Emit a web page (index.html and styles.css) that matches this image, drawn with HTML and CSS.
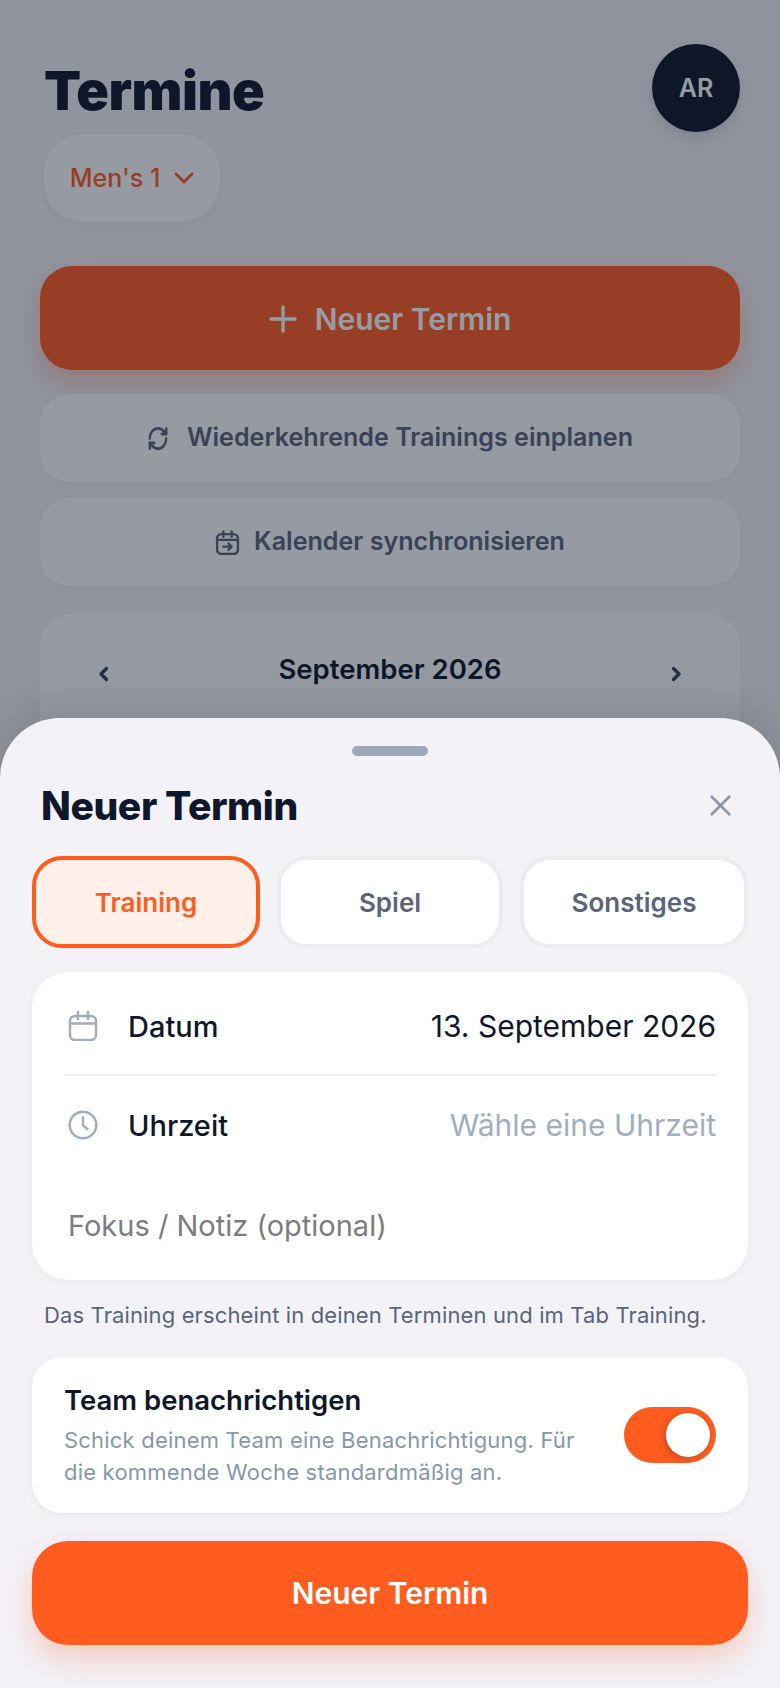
FILE: index.html
```html
<!DOCTYPE html>
<html lang="de">
<head>
    <meta charset="UTF-8">
    <title>Termine</title>
    <link rel="stylesheet" href="styles.css">
</head>
<body>
    <div class="page">
        <div class="top">
            <div>
                <h1 class="page-title">Termine</h1>
                <button class="team-pill">Men's 1
                    <svg class="chev" viewBox="0 0 20 12"><path d="M2 2l8 8 8-8"/></svg>
                </button>
            </div>
            <div class="avatar">AR</div>
        </div>

        <button class="btn-main">
            <svg class="plus" viewBox="0 0 28 28"><path d="M14 2v24M2 14h24"/></svg>
            Neuer Termin
        </button>
        <button class="btn-soft">
            <svg class="refresh-icon" viewBox="0 0 24 24" preserveAspectRatio="none">
                <path d="M3 12a9 9 0 0 1 9-9 9.75 9.75 0 0 1 6.74 2.74L21 8"/>
                <path d="M21 3v5h-5"/>
                <path d="M21 12a9 9 0 0 1-9 9 9.75 9.75 0 0 1-6.74-2.74L3 16"/>
                <path d="M8 16H3v5"/>
            </svg>
            Wiederkehrende Trainings einplanen
        </button>
        <button class="btn-soft second">
            <svg class="soft-icon" viewBox="0 0 24 24">
                <rect x="2" y="4" width="20" height="19" rx="4"/>
                <path d="M8 1.500v5M16 1.500v5M2 9.500h20M8 16h8M13 13l3 3-3 3"/>
            </svg>
            Kalender synchronisieren
        </button>

        <div class="month-card">
            <svg class="month-arrow" viewBox="0 0 11 16"><path d="M8.500 2.500L3 8l5.500 5.500"/></svg>
            <span class="month-name">September 2026</span>
            <svg class="month-arrow" viewBox="0 0 11 16"><path d="M2.500 2.500L8 8l-5.500 5.500"/></svg>
        </div>
    </div>

    <div class="scrim"></div>

    <div class="sheet">
        <div class="handle"></div>
        <div class="sheet-head">
            <h2>Neuer Termin</h2>
            <svg class="close" viewBox="0 0 24 24"><path d="M2 2l20 20M22 2L2 22"/></svg>
        </div>

        <div class="tabs">
            <div class="tab active">Training</div>
            <div class="tab">Spiel</div>
            <div class="tab">Sonstiges</div>
        </div>

        <div class="form-card">
            <div class="form-row first">
                <svg class="row-icon" viewBox="0 0 30 30">
                    <rect x="2" y="5" width="26" height="24" rx="5"/>
                    <path d="M10 1v7M20 1v7M2 12.500h26"/>
                </svg>
                <span class="row-label">Datum</span>
                <span class="row-value">13. September 2026</span>
            </div>
            <div class="form-row">
                <svg class="row-icon" viewBox="0 0 30 30">
                    <circle cx="15" cy="15" r="13.300"/>
                    <path d="M15 7.500v8l4.500 3.500"/>
                </svg>
                <span class="row-label">Uhrzeit</span>
                <span class="row-value muted">Wähle eine Uhrzeit</span>
            </div>
            <div class="note">Fokus / Notiz (optional)</div>
        </div>

        <p class="hint">Das Training erscheint in deinen Terminen und im Tab Training.</p>

        <div class="notify-card">
            <div class="notify-text">
                <strong>Team benachrichtigen</strong>
                <p>Schick deinem Team eine Benachrichtigung. Für die kommende Woche standardmäßig an.</p>
            </div>
            <div class="toggle"><span class="knob"></span></div>
        </div>

        <button class="btn-submit">Neuer Termin</button>
    </div>
</body>
</html>
```

FILE: styles.css
```css
* {
    box-sizing: border-box;
}
html, body {
    margin: 0;
    padding: 0;
}
body {
    width: 780px;
    height: 1688px;
    overflow: hidden;
    position: relative;
    background-color: #f2f2f7;
    font-family: 'Inter', 'Liberation Sans', sans-serif;
    color: #0f172a;
}
button {
    font-family: inherit;
    border: none;
    display: flex;
    align-items: center;
    justify-content: center;
}
svg {
    fill: none;
    stroke: currentColor;
    stroke-linecap: round;
    stroke-linejoin: round;
    flex-shrink: 0;
}

.page {
    padding: 44px 40px 0;
}
.top {
    display: flex;
    justify-content: space-between;
    align-items: flex-start;
    margin-bottom: 44px;
}
.page-title {
    margin: 0 0 0 4px;
    height: 90px;
    line-height: 93px;
    font-size: 54px;
    font-weight: 900;
    letter-spacing: -0.5px;
}
.team-pill {
    margin-left: 4px;
    width: 176px;
    height: 88px;
    gap: 14px;
    border-radius: 38px;
    background-color: #fdfdfd;
    color: #ff5c20;
    font-size: 25px;
    font-weight: 500;
    box-shadow: 0 2px 6px rgba(15,23,42,0.05);
}
.chev {
    width: 20px;
    height: 12px;
    stroke-width: 2.800;
}
.avatar {
    width: 88px;
    height: 88px;
    border-radius: 50%;
    background-color: #0f172a;
    color: #fff;
    display: flex;
    align-items: center;
    justify-content: center;
    font-size: 25px;
    font-weight: 600;
    box-shadow: 0 6px 14px rgba(15,23,42,0.12);
}
.btn-main {
    width: 100%;
    height: 104px;
    padding-top: 2px;
    gap: 18px;
    border-radius: 32px;
    background-color: #ff5c20;
    color: #fff;
    font-size: 30px;
    font-weight: 600;
    box-shadow: 0 12px 28px rgba(255,92,32,0.3);
}
.plus {
    width: 28px;
    height: 28px;
    stroke-width: 3.400;
}
.btn-soft {
    width: 100%;
    height: 88px;
    margin-top: 24px;
    padding-bottom: 3px;
    gap: 18px;
    border-radius: 30px;
    background-color: #fdfdfd;
    color: #5b647a;
    font-size: 25.100px;
    font-weight: 600;
    box-shadow: 0 2px 6px rgba(15,23,42,0.04);
}
.btn-soft.second {
    margin-top: 16px;
    gap: 14px;
}
.refresh-icon {
    width: 22px;
    height: 27px;
    margin-top: 3px;
    stroke-width: 2.500;
}
.soft-icon {
    width: 25px;
    height: 25px;
    margin-top: 3px;
    stroke-width: 2.300;
}
.month-card {
    margin-top: 28px;
    height: 300px;
    padding: 38px 58px 0;
    display: flex;
    justify-content: space-between;
    align-items: flex-start;
    border-radius: 32px;
    background-color: #fdfdfd;
}
.month-name {
    font-size: 27.500px;
    font-weight: 600;
}
.month-arrow {
    width: 11px;
    height: 16px;
    margin-top: 14px;
    color: #334155;
    stroke-width: 3.400;
}

.scrim {
    position: absolute;
    inset: 0;
    background-color: rgba(15,23,42,0.43);
}

.sheet {
    position: absolute;
    left: 0;
    right: 0;
    top: 718px;
    bottom: 0;
    padding: 28px 32px 0;
    background-color: #f2f2f7;
    border-radius: 60px 60px 0 0;
    box-shadow: 0 -12px 40px rgba(15,23,42,0.12);
}
.handle {
    width: 76px;
    height: 10px;
    margin: 0 auto;
    border-radius: 5px;
    background-color: #9ca8ba;
}
.sheet-head {
    display: flex;
    justify-content: space-between;
    align-items: center;
    height: 60px;
    margin: 19px 17px 21px 9px;
}
.sheet-head h2 {
    margin: 0;
    font-size: 39px;
    font-weight: 800;
    letter-spacing: -0.4px;
}
.close {
    width: 21px;
    height: 21px;
    color: #8a96aa;
    stroke-width: 3;
}
.tabs {
    display: grid;
    grid-template-columns: 228px 226px 228px;
    gap: 17px;
    height: 92px;
}
.tab {
    display: flex;
    align-items: center;
    justify-content: center;
    border: 4px solid #ececef;
    border-radius: 30px;
    background-color: #fff;
    color: #5b647a;
    font-size: 26px;
    font-weight: 600;
}
.tab.active {
    border-color: #ff5c20;
    background-color: #fff1e9;
    color: #ff5c20;
}
.form-card {
    margin-top: 24px;
    height: 308px;
    padding: 0 32px;
    border-radius: 36px;
    background-color: #fff;
    box-shadow: 0 2px 8px rgba(15,23,42,0.05);
}
.form-row {
    display: flex;
    align-items: center;
    height: 98px;
}
.form-row.first {
    height: 104px;
    padding-top: 6px;
    border-bottom: 2px solid #eeeef1;
}
.row-icon {
    width: 30px;
    height: 30px;
    margin-left: 4px;
    color: #a1adc0;
    stroke-width: 2.500;
}
.row-label {
    margin-left: 30px;
    font-size: 29px;
    font-weight: 500;
}
.row-value {
    margin-left: auto;
    font-size: 30px;
}
.row-value.muted {
    color: #a1adc0;
}
.note {
    margin: 0 0 0 4px;
    height: 104px;
    line-height: 104px;
    color: #7c7c82;
    font-size: 29px;
}
.hint {
    margin: 21px 0 0 12px;
    color: #5b647a;
    font-size: 22px;
    line-height: 28px;
    letter-spacing: 0.13px;
}
.notify-card {
    display: flex;
    align-items: center;
    justify-content: space-between;
    margin-top: 28px;
    height: 156px;
    padding: 0 32px;
    border-radius: 30px;
    background-color: #fff;
    box-shadow: 0 2px 8px rgba(15,23,42,0.05);
}
.notify-text strong {
    display: block;
    font-size: 27.500px;
    font-weight: 600;
    line-height: 36px;
}
.notify-text p {
    width: 530px;
    margin: 6px 0 0;
    color: #8a96aa;
    font-size: 22px;
    line-height: 32px;
    letter-spacing: 0.2px;
}
.toggle {
    display: flex;
    align-items: center;
    justify-content: flex-end;
    width: 92px;
    height: 56px;
    padding-right: 6px;
    border-radius: 28px;
    background-color: #ff5c20;
}
.knob {
    width: 44px;
    height: 44px;
    border-radius: 50%;
    background-color: #fff;
    box-shadow: -2px 2px 6px rgba(15,23,42,0.25);
}
.btn-submit {
    width: 100%;
    height: 104px;
    margin-top: 28px;
    border-radius: 36px;
    background-color: #ff5c20;
    color: #fff;
    font-size: 30px;
    font-weight: 600;
    box-shadow: 0 14px 30px rgba(255,92,32,0.25);
}
```
